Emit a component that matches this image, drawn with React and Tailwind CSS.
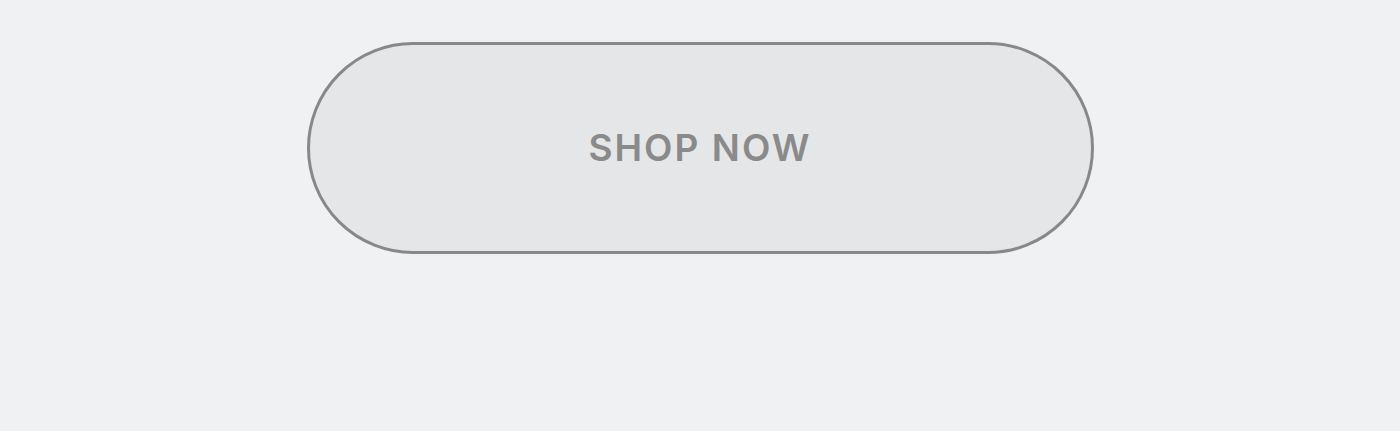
export default function App() {
  return (
    <div className="min-h-screen bg-[#f0f1f3] pt-[42px] flex justify-center">
      <button
        type="button"
        className="w-[787px] h-[212px] rounded-full border-[3px] border-[#888888] bg-[#e5e6e8] text-[#8a8a8a] text-[37px] font-semibold tracking-[0.055em] uppercase"
        style={{ fontFamily: 'Inter, "Liberation Sans", sans-serif' }}
      >
        Shop Now
      </button>
    </div>
  );
}
